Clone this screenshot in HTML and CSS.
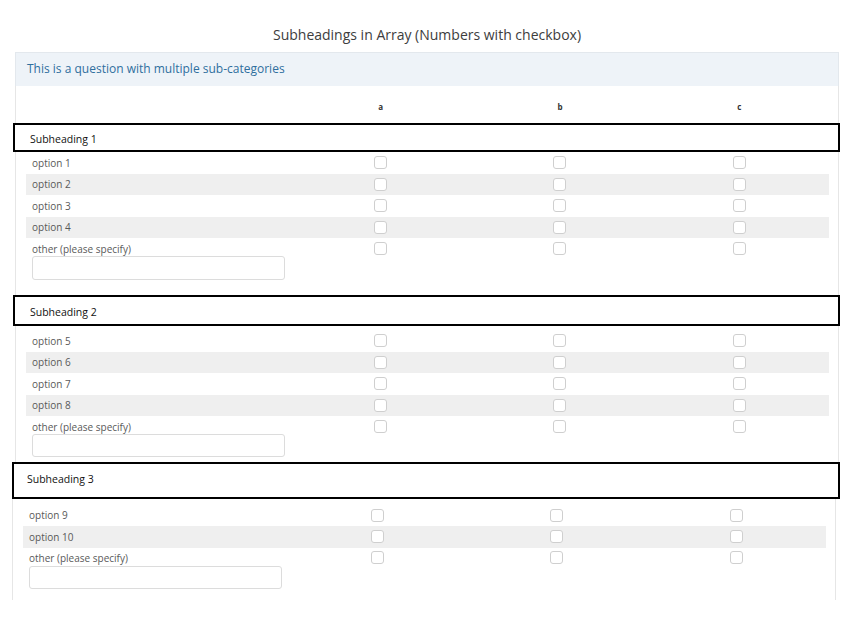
FILE: index.html
```html
<!DOCTYPE html>
<html lang="en">
  <head>
    <meta charset="UTF-8" />
    <meta name="viewport" content="width=device-width, initial-scale=1.0" />
    <title>Subheadings in Array</title>
    <link rel="stylesheet" href="styles.css">
  </head>
  <body>
    <div class="page">
      <h1 class="title">Subheadings in Array (Numbers with checkbox)</h1>

      <div class="panel">
        <div class="question">This is a question with multiple sub-categories</div>

        <div class="colhead">
          <span></span>
          <span>a</span>
          <span>b</span>
          <span>c</span>
        </div>

        <div class="subheading">Subheading 1</div>
        <div class="section section-1">
          <div class="row"><span class="label">option 1</span><span class="cell"><span class="box"></span></span><span class="cell"><span class="box"></span></span><span class="cell"><span class="box"></span></span></div>
          <div class="row odd"><span class="label">option 2</span><span class="cell"><span class="box"></span></span><span class="cell"><span class="box"></span></span><span class="cell"><span class="box"></span></span></div>
          <div class="row"><span class="label">option 3</span><span class="cell"><span class="box"></span></span><span class="cell"><span class="box"></span></span><span class="cell"><span class="box"></span></span></div>
          <div class="row odd"><span class="label">option 4</span><span class="cell"><span class="box"></span></span><span class="cell"><span class="box"></span></span><span class="cell"><span class="box"></span></span></div>
          <div class="row other">
            <span class="label">other (please specify)</span><span class="cell"><span class="box"></span></span><span class="cell"><span class="box"></span></span><span class="cell"><span class="box"></span></span>
            <input class="specify" type="text">
          </div>
        </div>

        <div class="subheading sub-2">Subheading 2</div>
        <div class="section section-2">
          <div class="row"><span class="label">option 5</span><span class="cell"><span class="box"></span></span><span class="cell"><span class="box"></span></span><span class="cell"><span class="box"></span></span></div>
          <div class="row odd"><span class="label">option 6</span><span class="cell"><span class="box"></span></span><span class="cell"><span class="box"></span></span><span class="cell"><span class="box"></span></span></div>
          <div class="row"><span class="label">option 7</span><span class="cell"><span class="box"></span></span><span class="cell"><span class="box"></span></span><span class="cell"><span class="box"></span></span></div>
          <div class="row odd"><span class="label">option 8</span><span class="cell"><span class="box"></span></span><span class="cell"><span class="box"></span></span><span class="cell"><span class="box"></span></span></div>
          <div class="row other">
            <span class="label">other (please specify)</span><span class="cell"><span class="box"></span></span><span class="cell"><span class="box"></span></span><span class="cell"><span class="box"></span></span>
            <input class="specify" type="text">
          </div>
        </div>

        <div class="subheading sub-3">Subheading 3</div>
        <div class="section section-3">
          <div class="row"><span class="label">option 9</span><span class="cell"><span class="box"></span></span><span class="cell"><span class="box"></span></span><span class="cell"><span class="box"></span></span></div>
          <div class="row odd"><span class="label">option 10</span><span class="cell"><span class="box"></span></span><span class="cell"><span class="box"></span></span><span class="cell"><span class="box"></span></span></div>
          <div class="row other">
            <span class="label">other (please specify)</span><span class="cell"><span class="box"></span></span><span class="cell"><span class="box"></span></span><span class="cell"><span class="box"></span></span>
            <input class="specify" type="text">
          </div>
        </div>
      </div>
    </div>
  </body>
</html>
```

FILE: styles.css
```css
body {
  font-family: "Open Sans", Arial, sans-serif;
  background-color: #fff;
  margin: 0;
}
.page {
  padding: 25px 15px 0;
}
.title {
  margin: 0 0 7px;
  font-size: 14px;
  font-weight: normal;
  line-height: 20px;
  text-align: center;
  color: #3d3d3d;
}
.question {
  height: 34px;
  box-sizing: border-box;
  padding-left: 11px;
  border: 1px solid #e3e8ed;
  border-bottom: 0;
  background-color: #eef3f8;
  color: #2f6f9e;
  font-size: 12px;
  line-height: 32px;
}
.colhead {
  display: grid;
  grid-template-columns: 265px repeat(3, 1fr);
  height: 37px;
  box-sizing: border-box;
  padding: 15px 9px 0 10px;
  border-left: 1px solid #e6e6e6;
  border-right: 1px solid #e6e6e6;
  font-size: 8px;
  font-weight: bold;
  line-height: 12px;
  text-align: center;
  color: #333;
}
.subheading {
  height: 29px;
  box-sizing: border-box;
  margin: 0 -1px 0 -2px;
  padding: 2px 0 0 15px;
  border: 2px solid #000;
  background-color: #fff;
  font-size: 10.5px;
  line-height: 25px;
  color: #111;
}
.sub-2 {
  height: 31px;
  padding-top: 3px;
}
.sub-3 {
  height: 37px;
  margin-left: -3px;
  padding: 0 0 0 13px;
  line-height: 31px;
}
.section {
  padding: 0 9px 0 10px;
  border-left: 1px solid #e6e6e6;
  border-right: 1px solid #e6e6e6;
}
.section-1 {
  padding-bottom: 15px;
}
.section-2 {
  padding-top: 4px;
  padding-bottom: 4.5px;
}
.section-3 {
  margin: 0 3px 0 -3px;
  padding-top: 6px;
  padding-bottom: 11px;
}
.row {
  display: grid;
  grid-template-columns: 265px repeat(3, 1fr);
  height: 21.5px;
  align-items: center;
  font-size: 10px;
  color: #595959;
}
.row.odd {
  background-color: #efefef;
}
.row.other {
  height: auto;
  padding-top: 3px;
  grid-template-rows: 15px auto;
}
.label {
  padding-left: 6px;
}
.cell {
  display: flex;
  justify-content: center;
}
.box {
  width: 11px;
  height: 11px;
  border: 1px solid #cfcfcf;
  border-radius: 3px;
  background-color: #fff;
}
.specify {
  grid-column: 1;
  width: 253px;
  height: 24px;
  box-sizing: border-box;
  margin: 0 0 0 6px;
  border: 1px solid #dcdcdc;
  border-radius: 3px;
  background-color: #fff;
}
.section-2 .specify {
  height: 23px;
}
.section-3 .row.other {
  padding-top: 2px;
  grid-template-rows: 16px auto;
}
.section-3 .specify {
  height: 23px;
}
```
